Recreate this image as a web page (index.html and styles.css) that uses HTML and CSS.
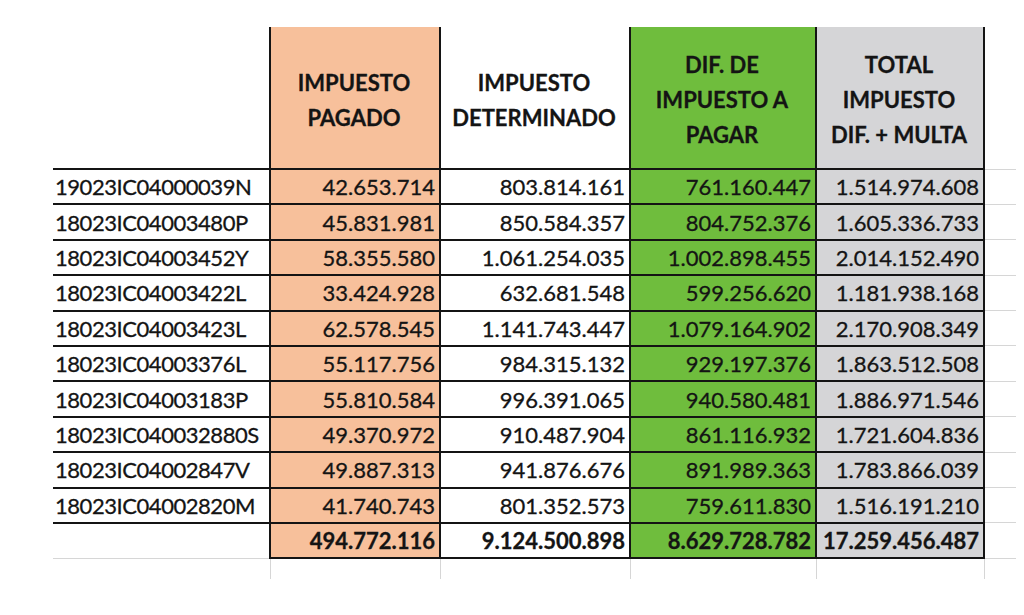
FILE: index.html
```html
<!DOCTYPE html>
<html lang="es">
<head>
<meta charset="utf-8">
<title>Impuestos</title>
<link rel="stylesheet" href="styles.css">
</head>
<body>
<table class="sheet">
  <colgroup>
    <col class="w-label"><col class="w-paid"><col class="w-det"><col class="w-dif"><col class="w-total"><col class="w-pad">
  </colgroup>
  <thead>
    <tr class="head">
      <th class="blank"></th>
      <th class="paid">IMPUESTO<br>PAGADO</th>
      <th class="det">IMPUESTO<br>DETERMINADO</th>
      <th class="dif">DIF. DE<br>IMPUESTO A<br>PAGAR</th>
      <th class="total">TOTAL<br>IMPUESTO<br>DIF. + MULTA</th>
      <th class="pad"></th>
    </tr>
  </thead>
  <tbody>
    <tr><td class="label">19023IC04000039N</td><td class="paid">42.653.714</td><td class="det">803.814.161</td><td class="dif">761.160.447</td><td class="total">1.514.974.608</td><td class="pad"></td></tr>
    <tr><td class="label">18023IC04003480P</td><td class="paid">45.831.981</td><td class="det">850.584.357</td><td class="dif">804.752.376</td><td class="total">1.605.336.733</td><td class="pad"></td></tr>
    <tr><td class="label">18023IC04003452Y</td><td class="paid">58.355.580</td><td class="det">1.061.254.035</td><td class="dif">1.002.898.455</td><td class="total">2.014.152.490</td><td class="pad"></td></tr>
    <tr><td class="label">18023IC04003422L</td><td class="paid">33.424.928</td><td class="det">632.681.548</td><td class="dif">599.256.620</td><td class="total">1.181.938.168</td><td class="pad"></td></tr>
    <tr><td class="label">18023IC04003423L</td><td class="paid">62.578.545</td><td class="det">1.141.743.447</td><td class="dif">1.079.164.902</td><td class="total">2.170.908.349</td><td class="pad"></td></tr>
    <tr><td class="label">18023IC04003376L</td><td class="paid">55.117.756</td><td class="det">984.315.132</td><td class="dif">929.197.376</td><td class="total">1.863.512.508</td><td class="pad"></td></tr>
    <tr><td class="label">18023IC04003183P</td><td class="paid">55.810.584</td><td class="det">996.391.065</td><td class="dif">940.580.481</td><td class="total">1.886.971.546</td><td class="pad"></td></tr>
    <tr><td class="label">18023IC040032880S</td><td class="paid">49.370.972</td><td class="det">910.487.904</td><td class="dif">861.116.932</td><td class="total">1.721.604.836</td><td class="pad"></td></tr>
    <tr><td class="label">18023IC04002847V</td><td class="paid">49.887.313</td><td class="det">941.876.676</td><td class="dif">891.989.363</td><td class="total">1.783.866.039</td><td class="pad"></td></tr>
    <tr><td class="label">18023IC04002820M</td><td class="paid">41.740.743</td><td class="det">801.352.573</td><td class="dif">759.611.830</td><td class="total">1.516.191.210</td><td class="pad"></td></tr>
  </tbody>
  <tfoot>
    <tr class="sum"><td class="label"></td><td class="paid">494.772.116</td><td class="det">9.124.500.898</td><td class="dif">8.629.728.782</td><td class="total">17.259.456.487</td><td class="pad"></td></tr>
    <tr class="ghost"><td></td><td></td><td></td><td></td><td></td><td class="pad"></td></tr>
  </tfoot>
</table>
</body>
</html>
```

FILE: styles.css
```css
html, body {
  margin: 0;
  background: #ffffff;
}
body {
  font-family: "Lato", "Liberation Sans", sans-serif;
  color: #141414;
  padding-top: 27px;
}
.sheet {
  margin-left: 53px;
  width: 963px;
  table-layout: fixed;
  border-collapse: collapse;
  font-size: 22px;
  -webkit-text-stroke: 0.3px #141414;
}
.w-label { width: 217px; }
.w-paid { width: 170px; }
.w-det { width: 190px; }
.w-dif { width: 186px; }
.w-total { width: 168px; }
.w-pad { width: 32px; }

th, td {
  padding: 0 4px 0 2px;
  white-space: nowrap;
}
.head th {
  height: 137px;
  font-weight: 700;
  line-height: 35px;
  text-align: center;
  vertical-align: middle;
  padding-top: 4px;
  border: 2px solid #141414;
  border-top: none;
}
.head th.blank {
  border-left: none;
}
.head th.pad {
  border: none;
  border-bottom: 1px solid #d6d6d6;
}
tbody td, .sum td {
  height: 33.4px;
  text-align: right;
  border: 2px solid #141414;
}
td.label {
  text-align: left;
  letter-spacing: -0.45px;
  border-left: none;
}
td.pad {
  border: none;
  border-bottom: 1px solid #d6d6d6;
}
.sum td {
  font-weight: 700;
}
.sum td.label {
  border-bottom: 1px solid #d6d6d6;
}
.ghost td {
  height: 20px;
  border: none;
  border-right: 1px solid #d6d6d6;
}
.ghost td.pad {
  border: none;
}
.paid { background: #f7c09b; }
.dif { background: #6fbd3d; }
.total { background: #d5d5d7; }
.head th.blank, .head th.det, .head th.pad { background: #ffffff; }
```
